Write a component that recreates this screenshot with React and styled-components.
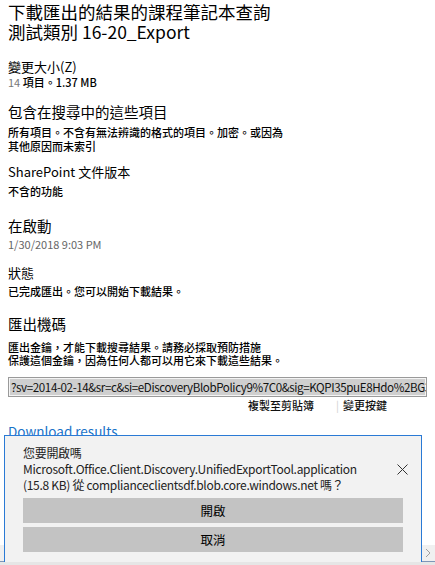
import styled, { createGlobalStyle } from 'styled-components'

const GlobalStyle = createGlobalStyle`
  html, body {
    margin: 0;
    padding: 0;
    background: #ffffff;
  }
  body {
    font-family: "Noto Sans CJK TC", "Noto Sans", sans-serif;
    color: #111;
    overflow: hidden;
  }
`

// 整個面板
let Panel = styled.div`
  position: relative;
  width: 435px;
  height: 565px;
  overflow: hidden;
  padding: 2px 8px 0 8px;
  box-sizing: border-box;
`

let Title = styled.h1`
  margin: 0;
  font-size: 17.5px;
  line-height: 20px;
  font-weight: 400;
  color: #000;
`

let Section = styled.div`
  margin-top: ${ props => props.gap || 0 }px;
`

// 區塊標題，大小不一
let Heading = styled.div`
  font-size: ${ props => props.big ? 14.5 : 13 }px;
  line-height: ${ props => props.big ? 18 : 16 }px;
  color: #000;
`

let Text = styled.div`
  font-size: 11px;
  line-height: ${ props => props.lh || 15 }px;
  margin-top: ${ props => props.gap || 0 }px;
  color: ${ props => props.muted ? '#666' : '#000' };
  font-weight: ${ props => props.muted ? 400 : 500 };
`

let Muted = styled.span`
  color: #777;
  font-weight: 400;
`

let KeyBox = styled.div`
  margin-top: 10px;
  height: 20px;
  border: 1px solid #9a9a9a;
  box-sizing: border-box;
  background: #cfcfcf;
  box-shadow: inset 0 0 0 1px #f4f4f4;
  padding: 0 2px;
  font-size: 11.6px;
  letter-spacing: -0.4px;
  line-height: 18px;
  white-space: nowrap;
  overflow: hidden;
  color: #111;
`

let LinkRow = styled.div`
  display: flex;
  justify-content: flex-end;
  align-items: center;
  margin-right: 40px;
  margin-top: 1px;
  font-size: 11px;
  font-weight: 500;
  line-height: 14px;
`

let Sep = styled.span`
  color: #d0d0d0;
  font-weight: 400;
  margin: 0 4px 0 22px;
`

let Download = styled.div`
  margin-top: 11px;
  font-size: 13.5px;
  line-height: 16px;
  color: #1a73c8;
`

// 底下的水平捲軸
let ScrollBar = styled.div`
  position: absolute;
  left: 0;
  right: 0;
  bottom: 0;
  height: 20px;
  background: #f0f0f0;
  border-bottom: 4px solid #e6e6e6;
  box-sizing: border-box;
  display: flex;
  justify-content: flex-end;
  align-items: center;
  &::after {
    content: '';
    position: absolute;
    left: 0;
    right: 0;
    bottom: -1px;
    height: 1px;
    background: #7f96b8;
  }
`

let Arrow = styled.div`
  width: 14px;
  height: 16px;
  display: flex;
  align-items: center;
  justify-content: center;
`

// 開啟檔案的提示框
let Prompt = styled.div`
  position: absolute;
  left: 4px;
  top: 435px;
  width: 418px;
  height: 127px;
  box-sizing: border-box;
  border: 1px solid #2a7ad5;
  border-bottom: none;
  background: #f2f2f2;
  padding: 9px 0 0 18px;
`

let PromptHead = styled.div`
  display: flex;
  align-items: center;
  justify-content: space-between;
  padding-right: 12px;
`

let PromptText = styled.div`
  font-size: 12px;
  letter-spacing: -0.3px;
  line-height: 16px;
  color: #222;
`

let Close = styled.button`
  border: none;
  background: none;
  padding: 0;
  width: 14px;
  height: 14px;
  display: flex;
  align-items: center;
  justify-content: center;
`

let Buttons = styled.div`
  display: flex;
  flex-direction: column;
  gap: 4px;
  margin-top: 5px;
  width: 380px;
`

let PromptBtn = styled.button`
  height: 25px;
  border: none;
  background: #c3c3c3;
  font-family: inherit;
  font-size: 12.5px;
  color: #000;
  padding: 0;
`

function App() {
  return (
    <>
      <GlobalStyle />
      <Panel>
        <Title>
          下載匯出的結果的課程筆記本查詢<br />
          測試類別 16-20_Export
        </Title>

        <Section gap={17}>
          <Heading>變更大小(Z)</Heading>
          <Text><Muted>14</Muted> 項目。1.37 MB</Text>
        </Section>

        <Section gap={13}>
          <Heading big>包含在搜尋中的這些項目</Heading>
          <Text lh={14} gap={4}>
            所有項目。不含有無法辨識的格式的項目。加密。或因為<br />
            其他原因而未索引
          </Text>
        </Section>

        <Section gap={11}>
          <Heading>SharePoint 文件版本</Heading>
          <Text gap={4}>不含的功能</Text>
        </Section>

        <Section gap={18}>
          <Heading big>在啟動</Heading>
          <Text muted gap={2}>1/30/2018 9:03 PM</Text>
        </Section>

        <Section gap={13}>
          <Heading>狀態</Heading>
          <Text gap={3}>已完成匯出。您可以開始下載結果。</Text>
        </Section>

        <Section gap={16}>
          <Heading big>匯出機碼</Heading>
          <Text lh={13} gap={8}>
            匯出金鑰，才能下載搜尋結果。請務必採取預防措施<br />
            保護這個金鑰，因為任何人都可以用它來下載這些結果。
          </Text>
          <KeyBox>?sv=2014-02-14&amp;sr=c&amp;si=eDiscoveryBlobPolicy9%7C0&amp;sig=KQPI35puE8Hdo%2BG3c</KeyBox>
          <LinkRow>
            <span>複製至剪貼簿</span>
            <Sep>|</Sep>
            <span>變更按鍵</span>
          </LinkRow>
        </Section>

        <Download>Download results</Download>

        <ScrollBar>
          <Arrow>
            <svg width="6" height="10" viewBox="0 0 6 10">
              <path d="M1 1 L5 5 L1 9" fill="none" stroke="#a0a0a0" strokeWidth="1" />
            </svg>
          </Arrow>
        </ScrollBar>

        <Prompt>
          <PromptHead>
            <PromptText>
              您要開啟嗎<br />
              Microsoft.Office.Client.Discovery.UnifiedExportTool.application<br />
              (15.8 KB) 從 complianceclientsdf.blob.core.windows.net 嗎？
            </PromptText>
            <Close aria-label="close">
              <svg width="11" height="11" viewBox="0 0 11 11">
                <path d="M0.5 0.5 L10.5 10.5 M10.5 0.5 L0.5 10.5" stroke="#333" strokeWidth="1" />
              </svg>
            </Close>
          </PromptHead>
          <Buttons>
            <PromptBtn>開啟</PromptBtn>
            <PromptBtn>取消</PromptBtn>
          </Buttons>
        </Prompt>
      </Panel>
    </>
  )
}

export default App
